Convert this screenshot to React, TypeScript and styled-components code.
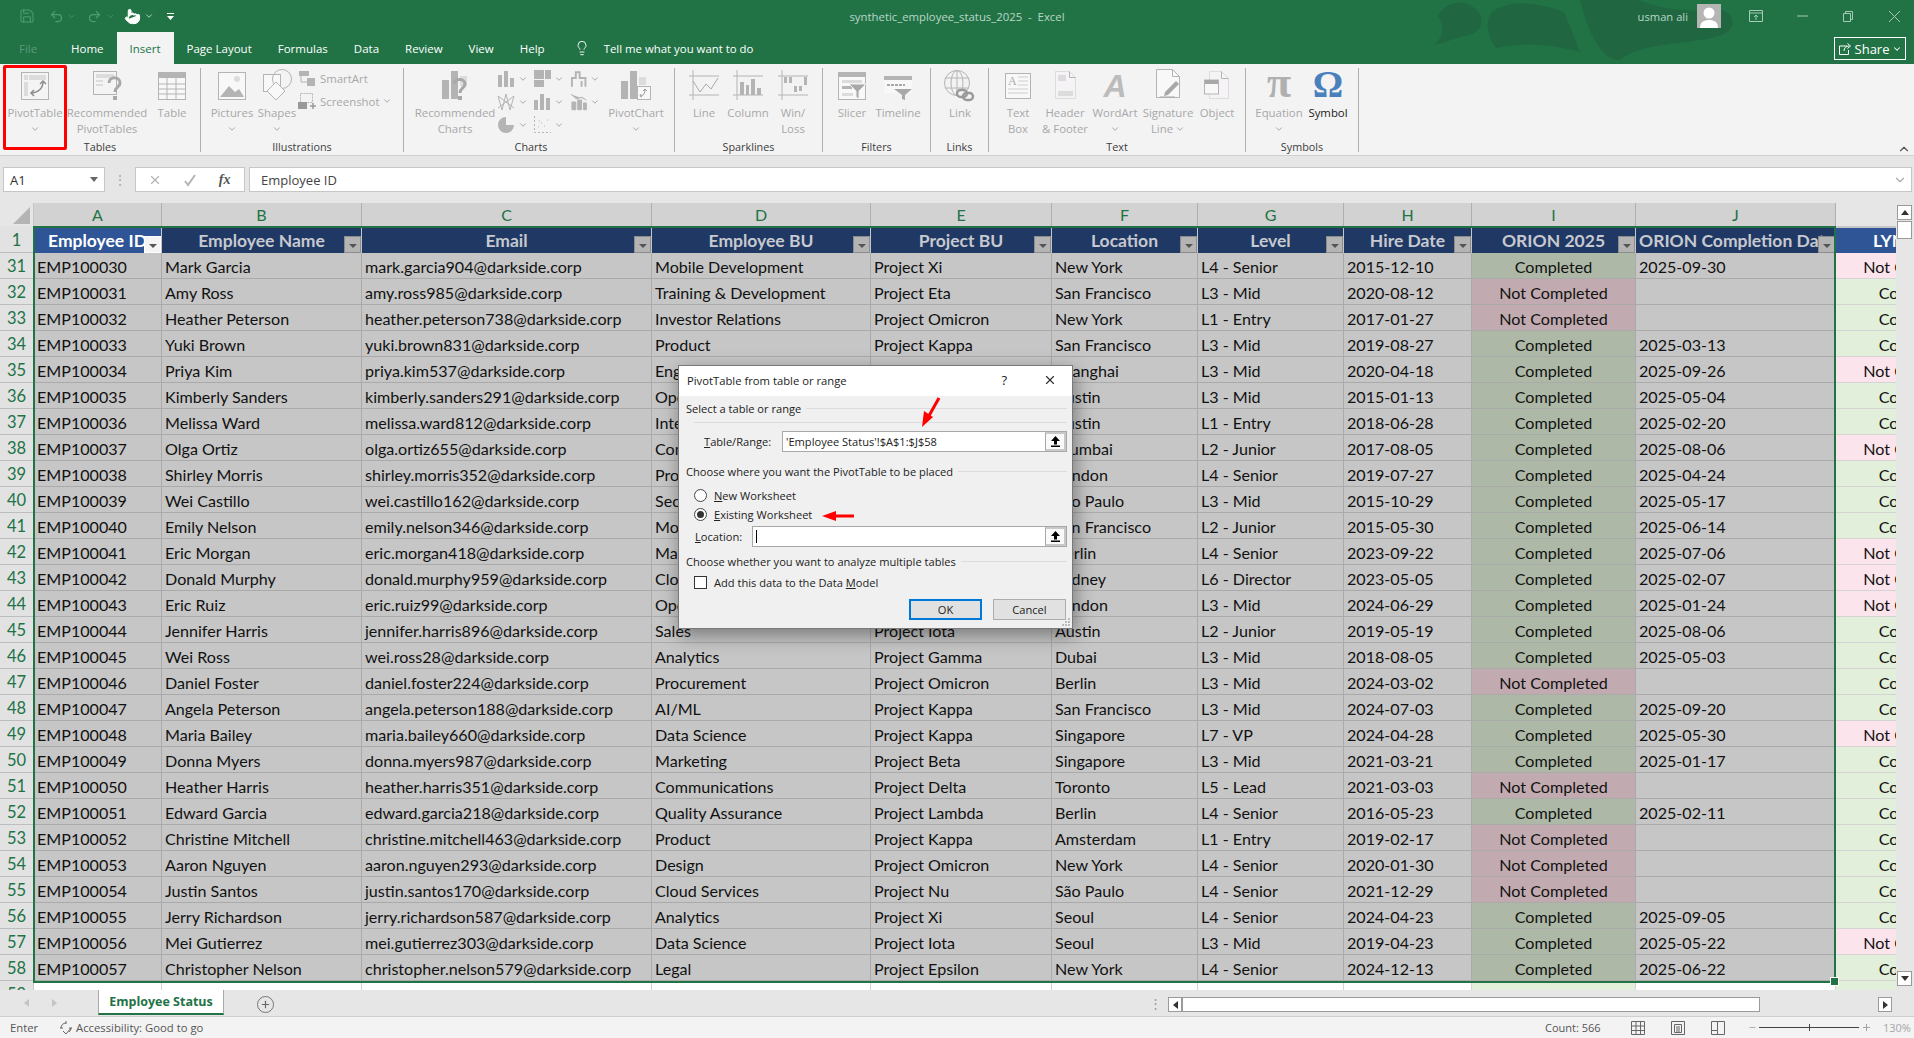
import React from 'react';
import styled, { createGlobalStyle } from 'styled-components';
import { ChevronDown, ChevronUp, Lightbulb, Save, Undo2, Redo2, Pointer, Plus, Minus, X } from 'lucide-react';

const UI = `"Open Sans", "Noto Sans", sans-serif`;
const CELL = `Lato, "Liberation Sans", sans-serif`;
const GRAY = '#b4b4b4';
const LIGHT = '#dcdcdc';

const GlobalStyle = createGlobalStyle`
  html, body { margin: 0; padding: 0; background: #e6e6e6; }
  body { font-family: ${UI}; overflow: hidden; }
`;

const Page = styled.div`
  position: relative;
  width: 1914px;
  height: 1038px;
  overflow: hidden;
  display: flex;
  flex-direction: column;
  background: #e6e6e6;
`;

/* ---------- title bar + tabs ---------- */
const Chrome = styled.div`
  position: relative;
  height: 64px;
  background: #217346;
  display: flex;
  flex-direction: column;
  flex: none;
`;
const Blobs = styled.svg`
  position: absolute;
  left: 1430px;
  top: 0;
`;
const TitleBar = styled.div`
  position: relative;
  height: 32px;
  display: grid;
  grid-template-columns: 1fr auto 1fr;
  align-items: center;
`;
const Qat = styled.div`
  display: flex;
  align-items: center;
  padding-left: 19px;
  color: #4f9a72;
`;
const QatGap = styled.span<{ $w: number; $tint?: string }>`
  display: inline-flex;
  margin-left: ${({ $w }) => $w}px;
  color: ${({ $tint }) => $tint ?? 'inherit'};
`;
const Title = styled.div`
  font-size: 11.35px;
  color: #b9d6c6;
  white-space: pre;
`;
const WindowControls = styled.div`
  display: flex;
  align-items: center;
  justify-content: flex-end;
  color: #a6cbb6;
`;
const UserName = styled.span`
  font-size: 11.2px;
  color: #b9d6c6;
  margin-right: 9px;
`;
const Avatar = styled.svg`
  margin-right: 28px;
  display: block;
`;
const ControlIcon = styled.svg<{ $mr: number }>`
  margin-right: ${({ $mr }) => $mr}px;
  display: block;
`;
const TabRow = styled.div`
  position: relative;
  height: 32px;
  display: flex;
  align-items: stretch;
`;
const Tab = styled.div<{ $active?: boolean; $dim?: boolean }>`
  padding: 0 13px;
  display: flex;
  align-items: center;
  font-size: 11.5px;
  color: ${({ $active, $dim }) => ($active ? '#217346' : $dim ? '#5b9a78' : '#fff')};
  background: ${({ $active }) => ($active ? '#f3f3f3' : 'transparent')};
`;
const FileTab = styled(Tab)`
  width: 58px;
  box-sizing: border-box;
  padding: 0 0 0 19px;
`;
const TellMe = styled.div`
  margin-left: 16px;
  display: flex;
  align-items: center;
  gap: 14px;
  font-size: 11.4px;
  color: #fff;
`;
const ShareButton = styled.div`
  position: absolute;
  left: 1834px;
  top: 5px;
  width: 72px;
  height: 23px;
  box-sizing: border-box;
  border: 1px solid #fff;
  display: flex;
  align-items: center;
  justify-content: center;
  gap: 3px;
  font-size: 13px;
  font-weight: 500;
  color: #fff;
`;

/* ---------- ribbon ---------- */
const Ribbon = styled.div`
  position: relative;
  flex: none;
  height: 92px;
  box-sizing: border-box;
  padding-top: 4px;
  background: #f3f3f3;
  border-bottom: 1px solid #d0d0d0;
  display: flex;
  align-items: flex-start;
`;
const Group = styled.div<{ $w: number }>`
  width: ${({ $w }) => $w}px;
  height: 84px;
  box-sizing: border-box;
  border-right: 1px solid #b0b0b0;
  display: flex;
  flex-direction: column;
  flex: none;
`;
const GroupItems = styled.div<{ $pad: number }>`
  display: flex;
  flex: none;
  height: 74px;
  padding-left: ${({ $pad }) => $pad}px;
`;
const GroupLabel = styled.div<{ $shift?: number }>`
  font-size: 10.8px;
  line-height: 10px;
  color: #3c3c3c;
  text-align: center;
  padding-right: ${({ $shift }) => $shift ?? 0}px;
`;
const Big = styled.div<{ $w: number; $on?: boolean }>`
  width: ${({ $w }) => $w}px;
  flex: none;
  display: flex;
  flex-direction: column;
  align-items: center;
  font-size: 11.4px;
  line-height: 16px;
  white-space: nowrap;
  color: ${({ $on }) => ($on ? '#222' : '#a8a8a8')};
`;
const IconSlot = styled.div`
  height: 37px;
  display: flex;
  align-items: flex-start;
  justify-content: center;
`;
const Chev = styled(ChevronDown)`
  display: block;
  color: #9a9a9a;
`;
const ChevSlot = styled.div`
  height: 16px;
  display: flex;
  align-items: center;
`;
const InlineLine = styled.div`
  display: flex;
  align-items: center;
  gap: 2px;
`;
const SmallList = styled.div`
  display: flex;
  flex-direction: column;
  gap: 3px;
`;
const SmallItem = styled.div`
  display: flex;
  align-items: center;
  gap: 3px;
  height: 20px;
  font-size: 11.4px;
  color: #a8a8a8;
`;
const ChartGrid = styled.div`
  display: grid;
  grid-template-columns: 36px 37px 30px;
  grid-auto-rows: 23px;
  flex: none;
  width: 103px;
  margin-top: -1px;
`;
const ChartCell = styled.div`
  display: flex;
  align-items: center;
  gap: 2px;
`;
const Collapse = styled(ChevronUp)`
  position: absolute;
  left: 1897px;
  top: 78px;
  color: #555;
`;
const RedBox = styled.div`
  position: absolute;
  left: 3px;
  top: 1px;
  width: 64px;
  height: 85px;
  box-sizing: border-box;
  border: 3px solid #f00;
  border-radius: 2px;
`;

/* ---------- formula bar ---------- */
const FormulaRow = styled.div`
  flex: none;
  height: 47px;
  box-sizing: border-box;
  padding: 11px 2px 11px 3px;
  display: flex;
  align-items: stretch;
  background: #e6e6e6;
`;
const NameBox = styled.div`
  width: 102px;
  box-sizing: border-box;
  background: #fff;
  border: 1px solid #c6c6c6;
  display: flex;
  align-items: center;
  justify-content: space-between;
  padding: 0 6px;
  font-size: 13px;
  color: #333;
`;
const Caret = styled.span`
  width: 0;
  height: 0;
  border-left: 4px solid transparent;
  border-right: 4px solid transparent;
  border-top: 5px solid #666;
`;
const Grip = styled.div`
  width: 30px;
  display: flex;
  justify-content: center;
  align-items: center;
  color: #aaa;
  font-size: 14px;
`;
const FxBox = styled.div`
  width: 110px;
  box-sizing: border-box;
  background: #fff;
  border: 1px solid #c6c6c6;
  display: grid;
  grid-template-columns: 1fr 1fr 1fr;
  align-items: center;
  justify-items: center;
  color: #b4b4b4;
  margin-right: 4px;
  padding: 0 2px;
`;
const FxText = styled.span`
  font-family: "Liberation Serif", serif;
  font-style: italic;
  font-size: 14px;
  font-weight: 700;
  color: #555;
`;
const FormulaInput = styled.div`
  flex: 1;
  background: #fff;
  border: 1px solid #c6c6c6;
  display: flex;
  align-items: center;
  justify-content: space-between;
  padding: 0 4px 0 11px;
  font-size: 13px;
  color: #444;
`;

/* ---------- sheet ---------- */
const SheetArea = styled.div`
  flex: none;
  height: 787px;
  display: flex;
`;
const Sheet = styled.div`
  position: relative;
  width: 1896px;
  height: 787px;
  overflow: hidden;
  background: #fff;
  display: grid;
  grid-template-columns: 34px 128px 200px 290px 219px 181px 146px 146px 128px 164px 200px 164px;
  grid-template-rows: 23px 27px repeat(29, 26px);
  font-family: ${CELL};
  font-size: 16.1px;
`;
const Corner = styled.div`
  background: #e6e6e6;
  border-right: 1px solid #c6c6c6;
  display: flex;
  align-items: flex-end;
  justify-content: flex-end;
  padding: 0 3px 2px 0;
`;
const ColHead = styled.div<{ $blank?: boolean }>`
  background: ${({ $blank }) => ($blank ? '#e6e6e6' : '#d2d2d2')};
  border-right: 1px solid ${({ $blank }) => ($blank ? '#e6e6e6' : '#aeaeae')};
  color: #217346;
  display: flex;
  align-items: center;
  justify-content: center;
  font-size: 16px;
`;
const RowHead = styled.div`
  background: #e2e2e2;
  border-right: 1px solid #c6c6c6;
  border-bottom: 1px solid #bdbdbd;
  color: #217346;
  display: flex;
  align-items: center;
  justify-content: center;
  padding-top: 1px;
  font-size: 16.5px;
`;
const HeadCell = styled.div<{ $lit?: boolean; $left?: boolean }>`
  position: relative;
  background: ${({ $lit }) => ($lit ? '#2f5597' : '#203864')};
  color: ${({ $lit }) => ($lit ? '#fff' : '#c6c9cf')};
  border-right: 1px solid #c6c6c6;
  border-top: 2px solid #c6c6c6;
  font-weight: 700;
  font-size: 17.5px;
  display: flex;
  align-items: center;
  justify-content: ${({ $left }) => ($left ? 'flex-start' : 'center')};
  padding-left: ${({ $left }) => ($left ? 3 : 0)}px;
  overflow: hidden;
  white-space: nowrap;
`;
const FilterBtn = styled.span<{ $lit?: boolean }>`
  position: absolute;
  right: 0;
  bottom: 0;
  width: 17px;
  height: 17px;
  box-sizing: border-box;
  background: ${({ $lit }) => ($lit ? '#f4f4f4' : '#b4b4b4')};
  border: 1px solid ${({ $lit }) => ($lit ? '#fff' : '#8c8c8c')};
  display: flex;
  align-items: center;
  justify-content: center;
`;
const FilterCaret = styled.span`
  margin-top: 2px;
  width: 0;
  height: 0;
  border-left: 4px solid transparent;
  border-right: 4px solid transparent;
  border-top: 4px solid #555;
`;
type Tone = 'plain' | 'done' | 'miss' | 'kdone' | 'kmiss' | 'white' | 'wdone';
const toneBg: Record<Tone, string> = {
  plain: '#c6c6c6',
  done: '#adb9a6',
  miss: '#c1abb0',
  kdone: '#e2efda',
  kmiss: '#fce4ec',
  white: '#fff',
  wdone: '#e2efda',
};
const Cell = styled.div<{ $tone: Tone; $center?: boolean }>`
  background: ${({ $tone }) => toneBg[$tone]};
  border-right: 1px solid ${({ $tone }) => ($tone === 'white' || $tone[0] === 'k' || $tone === 'wdone' ? '#d4d4d4' : '#aaa')};
  border-bottom: 1px solid ${({ $tone }) => ($tone === 'white' || $tone[0] === 'k' || $tone === 'wdone' ? '#d4d4d4' : '#aaa')};
  color: #111;
  display: flex;
  align-items: center;
  justify-content: ${({ $center }) => ($center ? 'center' : 'flex-start')};
  padding: 1px 3px 0;
  overflow: hidden;
  white-space: nowrap;
`;
const Selection = styled.div`
  position: absolute;
  left: 33px;
  top: 23px;
  width: 1803px;
  height: 757px;
  box-sizing: border-box;
  border: 2px solid #217346;
  pointer-events: none;
`;
const Handle = styled.div`
  position: absolute;
  right: -5px;
  bottom: -5px;
  width: 7px;
  height: 7px;
  background: #217346;
  border: 1px solid #fff;
`;
const VScroll = styled.div`
  width: 18px;
  background: #e6e6e6;
  padding-top: 2px;
  padding-left: 1px;
  display: flex;
  flex-direction: column;
  box-sizing: border-box;
`;
const ScrollBtn = styled.div<{ $wide?: number }>`
  width: ${({ $wide }) => $wide ?? 15}px;
  height: 15px;
  box-sizing: border-box;
  background: #fff;
  border: 1px solid #9a9a9a;
  display: flex;
  align-items: center;
  justify-content: center;
  flex: none;
`;
const VThumb = styled.div`
  width: 15px;
  height: 18px;
  margin-top: 1px;
  background: #fff;
  border: 1px solid #9a9a9a;
  box-sizing: border-box;
`;
const VGap = styled.div`
  flex: 1;
`;
const VEnd = styled.div`
  flex: none;
  height: 4px;
`;
const Tri = styled.span<{ $dir: 'up' | 'down' | 'left' | 'right'; $color?: string }>`
  width: 0;
  height: 0;
  ${({ $dir, $color }) => {
    const c = $color ?? '#333';
    if ($dir === 'up') return `border-left:4px solid transparent;border-right:4px solid transparent;border-bottom:5px solid ${c};`;
    if ($dir === 'down') return `border-left:4px solid transparent;border-right:4px solid transparent;border-top:5px solid ${c};`;
    if ($dir === 'left') return `border-top:4px solid transparent;border-bottom:4px solid transparent;border-right:5px solid ${c};`;
    return `border-top:4px solid transparent;border-bottom:4px solid transparent;border-left:5px solid ${c};`;
  }}
`;

/* ---------- sheet tabs + status ---------- */
const SheetTabs = styled.div`
  flex: none;
  height: 27px;
  box-sizing: border-box;
  border-bottom: 1px solid #cfcfcf;
  background: #e6e6e6;
  display: flex;
  align-items: flex-start;
`;
const TabArrows = styled.div`
  width: 98px;
  height: 25px;
  display: flex;
  align-items: center;
  gap: 23px;
  padding-left: 24px;
  box-sizing: border-box;
`;
const SheetTab = styled.div`
  width: 126px;
  height: 25px;
  box-sizing: border-box;
  background: #fff;
  border-left: 1px solid #aaa;
  border-right: 1px solid #aaa;
  border-bottom: 2px solid #217346;
  color: #217346;
  font-weight: 700;
  font-size: 12.5px;
  display: flex;
  align-items: center;
  justify-content: center;
`;
const AddSheet = styled.div`
  margin-left: 33px;
  margin-top: 6px;
  width: 15px;
  height: 15px;
  border: 1px solid #777;
  border-radius: 50%;
  color: #666;
  display: flex;
  align-items: center;
  justify-content: center;
`;
const TabSplit = styled.div`
  margin-left: 871px;
  margin-top: 4px;
  color: #999;
  font-size: 13px;
  width: 20px;
  text-align: center;
`;
const HScroll = styled.div`
  margin-top: 7px;
  margin-left: 3px;
  width: 724px;
  display: flex;
  align-items: stretch;
  height: 15px;
`;
const HThumb = styled.div`
  width: 578px;
  background: #fff;
  border: 1px solid #9a9a9a;
  box-sizing: border-box;
`;
const HTrack = styled.div`
  flex: 1;
`;
const StatusBar = styled.div`
  flex: none;
  height: 21px;
  background: #f3f3f3;
  display: flex;
  align-items: center;
  font-size: 11px;
  color: #555;
  padding-left: 10px;
`;
const StatusLeft = styled.div`
  display: flex;
  align-items: center;
  gap: 2px;
  width: 1535px;
  font-size: 11.3px;
`;
const EnterText = styled.span`
  width: 46px;
`;
const CountText = styled.span`
  width: 86px;
`;
const ViewIcon = styled.svg`
  margin-right: 26px;
  display: block;
`;
const Zoom = styled.div`
  display: flex;
  align-items: center;
  margin-left: -3px;
  color: #9a9a9a;
`;
const ZoomTrack = styled.div`
  position: relative;
  width: 100px;
  height: 1px;
  margin: 0 2px;
  background: #444;
`;
const ZoomTick = styled.span`
  position: absolute;
  left: 50px;
  top: -3px;
  width: 1px;
  height: 7px;
  background: #444;
`;
const ZoomPct = styled.span`
  margin-left: 11px;
  color: #a6a6a6;
`;

/* ---------- dialog ---------- */
const Dialog = styled.div`
  position: absolute;
  left: 678px;
  top: 365px;
  width: 395px;
  height: 264px;
  box-sizing: border-box;
  background: #f0f0f0;
  border: 1px solid #7a7a7a;
  box-shadow: 2px 6px 18px rgba(0, 0, 0, 0.4);
  font-size: 11.1px;
  color: #222;
  display: flex;
  flex-direction: column;
`;
const DialogTitle = styled.div`
  flex: none;
  height: 30px;
  background: #fff;
  display: flex;
  align-items: center;
  padding: 0 0 2px 8px;
  box-sizing: border-box;
  font-size: 11.25px;
`;
const TitleText = styled.span`
  flex: 1;
`;
const HelpMark = styled.span`
  font-size: 13px;
  margin-right: 36px;
`;
const DialogX = styled(X)`
  margin-right: 15px;
  color: #333;
`;
const DialogBody = styled.div`
  position: relative;
  flex: 1;
  padding: 0 5px 0 7px;
  display: flex;
  flex-direction: column;
`;
const Legend = styled.div<{ $mt: number }>`
  margin-top: ${({ $mt }) => $mt}px;
  height: 16px;
  display: flex;
  align-items: center;
  gap: 5px;
  white-space: nowrap;
`;
const Rule = styled.div`
  flex: 1;
  height: 1px;
  background: #dcdcdc;
`;
const SubRule = styled.div`
  margin: 6px 0 0 8px;
  height: 1px;
  background: #dcdcdc;
`;
const FieldRow = styled.div<{ $mt: number; $indent: number }>`
  margin-top: ${({ $mt }) => $mt}px;
  padding-left: ${({ $indent }) => $indent}px;
  display: flex;
  align-items: center;
  height: 21px;
`;
const FieldLabel = styled.span<{ $w: number }>`
  width: ${({ $w }) => $w}px;
  flex: none;
`;
const FieldBox = styled.div`
  flex: 1;
  height: 21px;
  box-sizing: border-box;
  border: 1px solid #a8a8a8;
  background: #fff;
  display: flex;
  align-items: center;
  padding-left: 3px;
  white-space: nowrap;
`;
const FieldText = styled.span`
  flex: 1;
  font-size: 11.1px;
`;
const TextCursor = styled.span`
  display: block;
  width: 1px;
  height: 13px;
  background: #000;
`;
const RefBtn = styled.div`
  width: 21px;
  height: 19px;
  background: #fafafa;
  border: 2px solid #c8c8c8;
  border-left: 1px solid #a8a8a8;
  box-sizing: border-box;
  display: flex;
  align-items: center;
  justify-content: center;
`;
const OptionRow = styled.div<{ $mt: number }>`
  margin-top: ${({ $mt }) => $mt}px;
  padding-left: 8px;
  height: 13px;
  display: flex;
  align-items: center;
  gap: 7px;
  white-space: nowrap;
`;
const Radio = styled.span<{ $on?: boolean }>`
  position: relative;
  width: 13px;
  height: 13px;
  box-sizing: border-box;
  border: 1px solid #444;
  border-radius: 50%;
  background: #fff;
  display: flex;
  align-items: center;
  justify-content: center;
  &::after {
    content: '';
    display: ${({ $on }) => ($on ? 'block' : 'none')};
    width: 7px;
    height: 7px;
    border-radius: 50%;
    background: #333;
  }
`;
const Check = styled.span`
  width: 13px;
  height: 13px;
  box-sizing: border-box;
  border: 1px solid #333;
  background: #fff;
`;
const U = styled.span`
  text-decoration: underline;
`;
const ButtonRow = styled.div`
  margin-top: 10px;
  display: flex;
  justify-content: flex-end;
  gap: 11px;
  padding-right: 1px;
`;
const DlgButton = styled.div<{ $primary?: boolean }>`
  width: 73px;
  height: 21px;
  box-sizing: border-box;
  background: #e1e1e1;
  border: ${({ $primary }) => ($primary ? '2px solid #0078d7' : '1px solid #adadad')};
  display: flex;
  align-items: center;
  justify-content: center;
`;
const ResizeGrip = styled.svg`
  position: absolute;
  right: 1px;
  bottom: 1px;
`;
const Annot = styled.svg`
  position: absolute;
  left: 0;
  top: 0;
  pointer-events: none;
`;

/* ---------- ribbon drawings ---------- */
const Svg = ({ w = 32, h = 32, children }: { w?: number; h?: number; children: React.ReactNode }) => (
  <svg width={w} height={h} viewBox={`0 0 ${w} ${h}`} fill="none">
    {children}
  </svg>
);
const UpArrow = () => (
  <svg width="11" height="11" viewBox="0 0 11 11" fill="#000">
    <path d="M5.500 0L10 5H7v3.500H4V5H1zM1 9.500h9V11H1z" />
  </svg>
);
const PivotIcon = () => (
  <Svg w={30} h={32}>
    <rect x="1.5" y="4.5" width="27" height="27" fill="#f4f4f4" stroke={GRAY} />
    <rect x="9" y="7" width="17" height="5" fill={LIGHT} />
    <rect x="4" y="7" width="4" height="5" fill={LIGHT} />
    <rect x="4" y="14" width="4" height="14" fill={LIGHT} />
    <path d="M11 25C18 25 23 20 23 14" stroke="#8c8c8c" strokeWidth="1.5" />
    <path d="M14 22l-3 3 3 3M20 16l3-3 3 3" stroke="#8c8c8c" strokeWidth="1.5" />
  </Svg>
);
const RecPivotIcon = () => (
  <Svg w={30} h={34}>
    <rect x="1.5" y="3.500" width="23" height="23" fill="#f4f4f4" stroke={GRAY} />
    <rect x="4" y="6" width="18" height="4" fill={LIGHT} />
    <rect x="4" y="12" width="7" height="2" fill={LIGHT} />
    <rect x="4" y="16" width="7" height="2" fill={LIGHT} />
    <path d="M17 15c0-7 11-7 11 0 0 4-5 4-5 9" stroke="#a8a8a8" strokeWidth="3" />
    <rect x="21" y="28" width="4" height="4" fill="#a8a8a8" />
  </Svg>
);
const TableIcon = () => (
  <Svg w={30} h={32}>
    <rect x="1.5" y="4.500" width="27" height="27" fill="#f8f8f8" stroke={GRAY} />
    <rect x="2" y="5" width="26" height="5" fill={GRAY} />
    <path d="M2 16h26M2 21h26M2 26h26M10 10v21M19 10v21" stroke={GRAY} />
  </Svg>
);
const PicturesIcon = () => (
  <Svg w={30} h={32}>
    <rect x="1.5" y="4.500" width="27" height="27" fill="#f8f8f8" stroke={GRAY} />
    <circle cx="20" cy="11" r="3" fill={LIGHT} />
    <path d="M3 29l9-11 6 6 4-3 5 8z" fill={GRAY} />
  </Svg>
);
const ShapesIcon = () => (
  <Svg w={32} h={34}>
    <rect x="2.500" y="6.500" width="17" height="17" fill="#f8f8f8" stroke={GRAY} />
    <circle cx="21" cy="11" r="9.500" stroke={GRAY} fill="none" />
    <path d="M15 14l9 9-9 9-9-9z" fill="#f8f8f8" stroke={GRAY} />
  </Svg>
);
const RecChartIcon = () => (
  <Svg w={30} h={34}>
    <rect x="2" y="12" width="7" height="19" fill={GRAY} />
    <rect x="11" y="3" width="7" height="28" fill={GRAY} />
    <rect x="20" y="8" width="7" height="10" fill={LIGHT} />
    <path d="M14 16c0-6 11-6 11 0 0 4-5 4-5 9" stroke="#a8a8a8" strokeWidth="3" />
    <rect x="18" y="28" width="4" height="4" fill="#a8a8a8" />
  </Svg>
);
const PivotChartIcon = () => (
  <Svg w={32} h={34}>
    <rect x="1" y="13" width="7" height="18" fill={GRAY} />
    <rect x="10" y="3" width="7" height="28" fill={GRAY} />
    <rect x="19" y="9" width="7" height="8" fill={LIGHT} />
    <rect x="17.500" y="18.500" width="13" height="13" fill="#f8f8f8" stroke={GRAY} />
    <path d="M25 22c0 3-1 5-4 6M21 26l-1 2 2 1M23 23l2-2 2 2" stroke="#999" />
  </Svg>
);
const SparkFrame = ({ children }: { children: React.ReactNode }) => (
  <Svg w={30} h={32}>
    <path d="M0 8h30M0 27h30M4 2v30" stroke={GRAY} />
    {children}
  </Svg>
);
const LineSpark = () => (
  <SparkFrame>
    <path d="M4 13l7 11 6-8 5 5 7-11" stroke="#a8a8a8" fill="none" />
  </SparkFrame>
);
const ColumnSpark = () => (
  <SparkFrame>
    <path d="M7 14h4v13H7zM13 17h3v10h-3zM18 11h4v16h-4zM24 20h4v7h-4z" fill={GRAY} />
  </SparkFrame>
);
const WinSpark = () => (
  <SparkFrame>
    <path d="M6 9h3v6H6zM11 9h3v6h-3zM16 18h3v6h-3zM21 18h3v5h-3zM26 9h3v8h-3z" fill={GRAY} />
  </SparkFrame>
);
const SlicerIcon = () => (
  <Svg w={30} h={32}>
    <rect x="1.500" y="4.500" width="27" height="27" fill="#f8f8f8" stroke={GRAY} />
    <rect x="2" y="5" width="26" height="4" fill={GRAY} />
    <rect x="5" y="12" width="20" height="3" fill={LIGHT} />
    <rect x="5" y="18" width="10" height="3" fill={GRAY} />
    <rect x="5" y="25" width="11" height="3" fill={LIGHT} />
    <path d="M12 16h17l-7 7v8l-3-2v-6z" fill="#a8a8a8" stroke="#f3f3f3" />
  </Svg>
);
const TimelineIcon = () => (
  <Svg w={30} h={32}>
    <rect x="1" y="8" width="28" height="17" fill="#f8f8f8" />
    <rect x="1" y="8" width="28" height="4" fill={GRAY} />
    <path d="M4 17h18" stroke="#a8a8a8" strokeWidth="2" strokeDasharray="3 1" />
    <path d="M11 21h18l-7 6v5l-3-1v-4z" fill="#a8a8a8" />
  </Svg>
);
const LinkIcon = () => (
  <Svg w={34} h={34}>
    <circle cx="14" cy="15" r="12.500" stroke={GRAY} />
    <ellipse cx="14" cy="15" rx="6" ry="12.500" stroke={GRAY} />
    <path d="M2 10h24M2 20h24M14 2v26" stroke={GRAY} />
    <rect x="14" y="22" width="10" height="7" rx="3.500" stroke="#999" strokeWidth="2.400" fill="#f3f3f3" />
    <rect x="20" y="25" width="10" height="7" rx="3.500" stroke="#999" strokeWidth="2.400" />
  </Svg>
);
const TextBoxIcon = () => (
  <Svg w={30} h={32}>
    <rect x="2.500" y="5.500" width="25" height="25" fill="#f8f8f8" stroke={GRAY} />
    <text x="5" y="17" fontSize="12" fill="#a8a8a8" fontFamily="Liberation Serif, serif">A</text>
    <path d="M15 9h10M15 13h10M15 17h10M5 21h20M5 25h20" stroke={LIGHT} strokeWidth="1.400" />
  </Svg>
);
const DocIcon = ({ bars }: { bars?: boolean }) => (
  <Svg w={24} h={34}>
    <path d="M2.500 3.500h14l6 6v21h-20z" fill="#f6f3f6" stroke={LIGHT} />
    <path d="M16.500 3.500v6h6" stroke={GRAY} />
    {bars && <rect x="5" y="7" width="8" height="6" fill={LIGHT} />}
    {bars && <rect x="5" y="23" width="15" height="5" fill={LIGHT} />}
  </Svg>
);
const SignatureIcon = () => (
  <Svg w={30} h={34}>
    <path d="M3.500 1.500h16l7 7v21h-23z" fill="#f8f8f8" stroke={GRAY} />
    <path d="M19.500 1.500v7h7" stroke={GRAY} />
    <path d="M12 24l11-11 3 3-11 11-4 1z" fill="#a8a8a8" />
    <path d="M7 29h15" stroke="#a8a8a8" />
  </Svg>
);
const ObjectIcon = () => (
  <Svg w={28} h={34}>
    <path d="M6.500 3.500h12l7 7v20h-19z" fill="#f6f3f6" stroke={LIGHT} />
    <path d="M18.500 3.500v7h7" stroke={GRAY} />
    <rect x="1.500" y="12" width="14" height="14" fill="#f8f8f8" stroke={GRAY} />
    <rect x="2" y="12" width="13" height="4" fill="#a8a8a8" />
  </Svg>
);
const WordArtGlyph = styled.span`
  font-family: "Liberation Sans", sans-serif;
  font-style: italic;
  font-weight: 700;
  font-size: 32px;
  line-height: 36px;
  color: #bcbcbc;
`;
const PiGlyph = styled.span`
  font-family: "Liberation Serif", serif;
  font-weight: 700;
  font-size: 44px;
  line-height: 30px;
  color: #b0b0b0;
`;
const OmegaGlyph = styled.span`
  font-family: "Liberation Serif", serif;
  font-weight: 700;
  font-size: 38px;
  line-height: 32px;
  color: #4a81bd;
`;
const MiniChart = ({ kind }: { kind: number }) => {
  const c = GRAY;
  const shapes: React.ReactNode[] = [
    <path key="0" d="M1 6h4v12H1zM7 2h4v16H7zM13 9h4v9h-4z" fill={c} />,
    <path key="1" d="M1 1h10v9H1zM12 1h6v9h-6zM1 11h10v7H1z" fill={c} />,
    <path key="2" d="M2 18V9h4V3h4v6h6v9M12 12v6" stroke={c} strokeWidth="2" />,
    <path key="3" d="M1 4l4 14 4-16 4 16 4-14M1 16L17 4M1 4l16 12" stroke={c} />,
    <path key="4" d="M1 8h4v10H1zM7 2h4v16H7zM13 6h4v12h-4z" fill={c} />,
    <path key="5" d="M1 2l6 5 5-2 5 3M2 10h4v8H2zM8 8h4v10H8zM14 11h3v7h-3z" stroke={c} fill={c} />,
    <path key="6" d="M9 2a8 8 0 1 0 8 8H9z" fill={c} />,
    <path key="7" d="M1.500 1v16.500H18M5 12h1M8 8h1M11 11h1M14 5h1M6 6h1" stroke={c} strokeDasharray="2 2" />,
  ];
  return <Svg w={19} h={19}>{shapes[kind]}</Svg>;
};
const SmallChev = () => <Chev size={10} />;

/* ---------- data ---------- */
const raw = `31|EMP100030|Mark Garcia|mark.garcia904|Mobile Development|Project Xi|New York|L4 - Senior|2015-12-10|2025-09-30|n
32|EMP100031|Amy Ross|amy.ross985|Training & Development|Project Eta|San Francisco|L3 - Mid|2020-08-12||c
33|EMP100032|Heather Peterson|heather.peterson738|Investor Relations|Project Omicron|New York|L1 - Entry|2017-01-27||c
34|EMP100033|Yuki Brown|yuki.brown831|Product|Project Kappa|San Francisco|L3 - Mid|2019-08-27|2025-03-13|c
35|EMP100034|Priya Kim|priya.kim537|Engineering|Project Nu|Shanghai|L3 - Mid|2020-04-18|2025-09-26|n
36|EMP100035|Kimberly Sanders|kimberly.sanders291|Operations|Project Beta|Austin|L3 - Mid|2015-01-13|2025-05-04|c
37|EMP100036|Melissa Ward|melissa.ward812|Internal Audit|Project Xi|Austin|L1 - Entry|2018-06-28|2025-02-20|c
38|EMP100037|Olga Ortiz|olga.ortiz655|Compliance|Project Iota|Mumbai|L2 - Junior|2017-08-05|2025-08-06|n
39|EMP100038|Shirley Morris|shirley.morris352|Product|Project Eta|London|L4 - Senior|2019-07-27|2025-04-24|c
40|EMP100039|Wei Castillo|wei.castillo162|Security|Project Delta|São Paulo|L3 - Mid|2015-10-29|2025-05-17|c
41|EMP100040|Emily Nelson|emily.nelson346|Mobile Development|Project Beta|San Francisco|L2 - Junior|2015-05-30|2025-06-14|c
42|EMP100041|Eric Morgan|eric.morgan418|Marketing|Project Nu|Berlin|L4 - Senior|2023-09-22|2025-07-06|n
43|EMP100042|Donald Murphy|donald.murphy959|Cloud Services|Project Xi|Sydney|L6 - Director|2023-05-05|2025-02-07|n
44|EMP100043|Eric Ruiz|eric.ruiz99|Operations|Project Eta|London|L3 - Mid|2024-06-29|2025-01-24|n
45|EMP100044|Jennifer Harris|jennifer.harris896|Sales|Project Iota|Austin|L2 - Junior|2019-05-19|2025-08-06|c
46|EMP100045|Wei Ross|wei.ross28|Analytics|Project Gamma|Dubai|L3 - Mid|2018-08-05|2025-05-03|c
47|EMP100046|Daniel Foster|daniel.foster224|Procurement|Project Omicron|Berlin|L3 - Mid|2024-03-02||c
48|EMP100047|Angela Peterson|angela.peterson188|AI/ML|Project Kappa|San Francisco|L3 - Mid|2024-07-03|2025-09-20|c
49|EMP100048|Maria Bailey|maria.bailey660|Data Science|Project Kappa|Singapore|L7 - VP|2024-04-28|2025-05-30|n
50|EMP100049|Donna Myers|donna.myers987|Marketing|Project Beta|Singapore|L3 - Mid|2021-03-21|2025-01-17|c
51|EMP100050|Heather Harris|heather.harris351|Communications|Project Delta|Toronto|L5 - Lead|2021-03-03||c
52|EMP100051|Edward Garcia|edward.garcia218|Quality Assurance|Project Lambda|Berlin|L4 - Senior|2016-05-23|2025-02-11|c
53|EMP100052|Christine Mitchell|christine.mitchell463|Product|Project Kappa|Amsterdam|L1 - Entry|2019-02-17||c
54|EMP100053|Aaron Nguyen|aaron.nguyen293|Design|Project Omicron|New York|L4 - Senior|2020-01-30||c
55|EMP100054|Justin Santos|justin.santos170|Cloud Services|Project Nu|São Paulo|L4 - Senior|2021-12-29||c
56|EMP100055|Jerry Richardson|jerry.richardson587|Analytics|Project Xi|Seoul|L4 - Senior|2024-04-23|2025-09-05|c
57|EMP100056|Mei Gutierrez|mei.gutierrez303|Data Science|Project Iota|Seoul|L3 - Mid|2019-04-23|2025-05-22|n
58|EMP100057|Christopher Nelson|christopher.nelson579|Legal|Project Epsilon|New York|L4 - Senior|2024-12-13|2025-06-22|c`;
const rows = raw.split('\n').map((l) => l.split('|'));

const headers = ['Employee ID', 'Employee Name', 'Email', 'Employee BU', 'Project BU', 'Location', 'Level', 'Hire Date', 'ORION 2025', 'ORION Completion Date'];

const chartOrder = [0, 1, 2, 3, 4, 5, 6, 7];

const DataRow = ({ r }: { r: string[] }) => {
  const [num, id, name, mail, bu, project, city, level, hire, done, k] = r;
  return (
    <>
      <RowHead>{num}</RowHead>
      <Cell $tone="plain">{id}</Cell>
      <Cell $tone="plain">{name}</Cell>
      <Cell $tone="plain">{mail}@darkside.corp</Cell>
      <Cell $tone="plain">{bu}</Cell>
      <Cell $tone="plain">{project}</Cell>
      <Cell $tone="plain">{city}</Cell>
      <Cell $tone="plain">{level}</Cell>
      <Cell $tone="plain">{hire}</Cell>
      <Cell $tone={done ? 'done' : 'miss'} $center>{done ? 'Completed' : 'Not Completed'}</Cell>
      <Cell $tone="plain">{done}</Cell>
      <Cell $tone={k === 'n' ? 'kmiss' : 'kdone'} $center>{k === 'n' ? 'Not Completed' : 'Completed'}</Cell>
    </>
  );
};

export default function App() {
  return (
    <Page>
      <GlobalStyle />
      <Chrome>
        <Blobs width="370" height="64" viewBox="0 0 370 64">
          <path d="M8 16c8-16 30-18 40-4 8 10 2 22-14 24-8 1-20 8-30 8 8-6 12-14 4-28zM62 12c20-14 50-8 72 0l16 40c-30-8-56-10-84-4-8-12-12-26-4-36zM150 0h60c20 10 50 12 80 10 10 0 20 16 4 24-30 12-80 6-104 26-16 0-30-20-40-60z" fill="#1f6641" />
        </Blobs>
        <TitleBar>
          <Qat>
            <Save size={16} strokeWidth={1.6} />
            <QatGap $w={14}><Undo2 size={15} strokeWidth={2} /></QatGap>
            <QatGap $w={3}><ChevronDown size={9} /></QatGap>
            <QatGap $w={11}><Redo2 size={15} strokeWidth={2} /></QatGap>
            <QatGap $w={4}><ChevronDown size={9} /></QatGap>
            <QatGap $w={9} $tint="#fff"><Pointer size={17} fill="#fff" strokeWidth={1.4} /></QatGap>
            <QatGap $w={3} $tint="#cfe3d8"><ChevronDown size={10} /></QatGap>
            <QatGap $w={12} $tint="#fff">
              <svg width="9" height="9" viewBox="0 0 9 9" fill="#fff">
                <path d="M1 1h7v1H1zM1 4h7L4.500 8z" />
              </svg>
            </QatGap>
          </Qat>
          <Title>synthetic_employee_status_2025  -  Excel</Title>
          <WindowControls>
            <UserName>usman ali</UserName>
            <Avatar width="24" height="24" viewBox="0 0 24 24">
              <rect width="24" height="24" fill="#b5b5b5" />
              <circle cx="12" cy="9" r="5.500" fill="#fff" />
              <path d="M3 24c0-6 4-8 9-8s9 2 9 8z" fill="#fff" />
            </Avatar>
            <ControlIcon $mr={34} width="14" height="12" viewBox="0 0 14 12" fill="none" stroke="currentColor">
              <path d="M.5.5h13v11H.5zM.5 3h13M7 10V5M5 7l2-2 2 2" />
            </ControlIcon>
            <ControlIcon $mr={35} width="11" height="2" viewBox="0 0 11 2" stroke="currentColor">
              <path d="M0 1h11" />
            </ControlIcon>
            <ControlIcon $mr={36} width="10" height="11" viewBox="0 0 10 11" fill="none" stroke="currentColor">
              <path d="M.5 2.500h7v8h-7zM2.500 2.500v-2h7v8h-2" />
            </ControlIcon>
            <ControlIcon $mr={14} width="11" height="11" viewBox="0 0 11 11" fill="none" stroke="currentColor">
              <path d="M0 0l11 11M11 0L0 11" />
            </ControlIcon>
          </WindowControls>
        </TitleBar>
        <TabRow>
          <FileTab $dim>File</FileTab>
          <Tab>Home</Tab>
          <Tab $active>Insert</Tab>
          <Tab>Page Layout</Tab>
          <Tab>Formulas</Tab>
          <Tab>Data</Tab>
          <Tab>Review</Tab>
          <Tab>View</Tab>
          <Tab>Help</Tab>
          <TellMe>
            <Lightbulb size={16} strokeWidth={1.4} />
            Tell me what you want to do
          </TellMe>
          <ShareButton>
            <svg width="14" height="14" viewBox="0 0 14 14" fill="none" stroke="#fff">
              <path d="M9 4H1.500v8.500h9V8M6 9c0-3 2-5 5-5M9.500 1.500L12.500 4 9.500 6.500" />
            </svg>
            Share
            <ChevronDown size={10} strokeWidth={2.5} />
          </ShareButton>
        </TabRow>
      </Chrome>

      <Ribbon>
        <Group $w={201}>
          <GroupItems $pad={3}>
            <Big $w={64}><IconSlot><PivotIcon /></IconSlot>PivotTable<ChevSlot><SmallChev /></ChevSlot></Big>
            <Big $w={80}><IconSlot><RecPivotIcon /></IconSlot>Recommended<span>PivotTables</span></Big>
            <Big $w={50}><IconSlot><TableIcon /></IconSlot>Table</Big>
          </GroupItems>
          <GroupLabel>Tables</GroupLabel>
        </Group>
        <Group $w={203}>
          <GroupItems $pad={6}>
            <Big $w={50}><IconSlot><PicturesIcon /></IconSlot>Pictures<ChevSlot><SmallChev /></ChevSlot></Big>
            <Big $w={40}><IconSlot><ShapesIcon /></IconSlot>Shapes<ChevSlot><SmallChev /></ChevSlot></Big>
            <SmallList>
              <SmallItem>
                <Svg w={20} h={20}><path d="M2 3h10v5H2zM10 10h8v8h-8z" fill={GRAY} /><path d="M4 8v6h6" stroke={GRAY} /></Svg>
                SmartArt
              </SmallItem>
              <SmallItem>
                <Svg w={20} h={20}><rect x="3.500" y="2.500" width="12" height="9" stroke={GRAY} strokeDasharray="2 1" /><rect x="1" y="11" width="9" height="7" fill="#999" /><path d="M13 15h6M16 12v6" stroke="#999" strokeWidth="1.500" /></Svg>
                Screenshot<SmallChev />
              </SmallItem>
            </SmallList>
          </GroupItems>
          <GroupLabel>Illustrations</GroupLabel>
        </Group>
        <Group $w={271}>
          <GroupItems $pad={9}>
            <Big $w={84}><IconSlot><RecChartIcon /></IconSlot>Recommended<span>Charts</span></Big>
            <ChartGrid>
              {chartOrder.map((k) => (
                <ChartCell key={k}><MiniChart kind={k} /><SmallChev /></ChartCell>
              ))}
            </ChartGrid>
            <Big $w={72}><IconSlot><PivotChartIcon /></IconSlot>PivotChart<ChevSlot><SmallChev /></ChevSlot></Big>
          </GroupItems>
          <GroupLabel $shift={16}>Charts</GroupLabel>
        </Group>
        <Group $w={148}>
          <GroupItems $pad={7}>
            <Big $w={44}><IconSlot><LineSpark /></IconSlot>Line</Big>
            <Big $w={44}><IconSlot><ColumnSpark /></IconSlot>Column</Big>
            <Big $w={46}><IconSlot><WinSpark /></IconSlot>Win/<span>Loss</span></Big>
          </GroupItems>
          <GroupLabel>Sparklines</GroupLabel>
        </Group>
        <Group $w={108}>
          <GroupItems $pad={6}>
            <Big $w={46}><IconSlot><SlicerIcon /></IconSlot>Slicer</Big>
            <Big $w={46}><IconSlot><TimelineIcon /></IconSlot>Timeline</Big>
          </GroupItems>
          <GroupLabel>Filters</GroupLabel>
        </Group>
        <Group $w={58}>
          <GroupItems $pad={4}>
            <Big $w={50}><IconSlot><LinkIcon /></IconSlot>Link</Big>
          </GroupItems>
          <GroupLabel>Links</GroupLabel>
        </Group>
        <Group $w={257}>
          <GroupItems $pad={6}>
            <Big $w={46}><IconSlot><TextBoxIcon /></IconSlot>Text<span>Box</span></Big>
            <Big $w={48}><IconSlot><DocIcon bars /></IconSlot>Header<span>&amp; Footer</span></Big>
            <Big $w={52}><IconSlot><WordArtGlyph>A</WordArtGlyph></IconSlot>WordArt<ChevSlot><SmallChev /></ChevSlot></Big>
            <Big $w={54}><IconSlot><SignatureIcon /></IconSlot>Signature<InlineLine>Line<SmallChev /></InlineLine></Big>
            <Big $w={44}><IconSlot><ObjectIcon /></IconSlot>Object</Big>
          </GroupItems>
          <GroupLabel>Text</GroupLabel>
        </Group>
        <Group $w={113}>
          <GroupItems $pad={7}>
            <Big $w={52}><IconSlot><PiGlyph>π</PiGlyph></IconSlot>Equation<ChevSlot><SmallChev /></ChevSlot></Big>
            <Big $w={46} $on><IconSlot><OmegaGlyph>Ω</OmegaGlyph></IconSlot>Symbol</Big>
          </GroupItems>
          <GroupLabel>Symbols</GroupLabel>
        </Group>
        <RedBox />
        <Collapse size={14} />
      </Ribbon>

      <FormulaRow>
        <NameBox>A1<Caret /></NameBox>
        <Grip>⋮</Grip>
        <FxBox>
          <X size={14} />
          <svg width="14" height="14" viewBox="0 0 14 14" fill="none" stroke="currentColor" strokeWidth="2"><path d="M2 8l3 4 7-10" /></svg>
          <FxText>fx</FxText>
        </FxBox>
        <FormulaInput>Employee ID<ChevronDown size={14} color="#aaa" /></FormulaInput>
      </FormulaRow>

      <SheetArea>
        <Sheet>
          <Corner>
            <svg width="17" height="17" viewBox="0 0 17 17"><path d="M17 0v17H0z" fill="#b4b4b4" /></svg>
          </Corner>
          {'ABCDEFGHIJ'.split('').map((c) => <ColHead key={c}>{c}</ColHead>)}
          <ColHead $blank />

          <RowHead>1</RowHead>
          {headers.map((h, i) => (
            <HeadCell key={h} $lit={i === 0} $left={i === 9}>
              {h}
              <FilterBtn $lit={i === 0}><FilterCaret /></FilterBtn>
            </HeadCell>
          ))}
          <HeadCell $lit>LYNX 2025</HeadCell>

          {rows.map((r) => <DataRow key={r[0]} r={r} />)}

          <RowHead>59</RowHead>
          <Cell $tone="white">EMP100058</Cell>
          <Cell $tone="white">Linda Hill</Cell>
          <Cell $tone="white">linda.hill412@darkside.corp</Cell>
          <Cell $tone="white"></Cell>
          <Cell $tone="white">Project Nu</Cell>
          <Cell $tone="white">Seoul</Cell>
          <Cell $tone="white">L4 - Senior</Cell>
          <Cell $tone="white"></Cell>
          <Cell $tone="wdone" $center>Completed</Cell>
          <Cell $tone="white"></Cell>
          <Cell $tone="wdone" $center>Completed</Cell>

          <Selection><Handle /></Selection>
        </Sheet>
        <VScroll>
          <ScrollBtn><Tri $dir="up" /></ScrollBtn>
          <VThumb />
          <VGap />
          <ScrollBtn><Tri $dir="down" /></ScrollBtn>
          <VEnd />
        </VScroll>
      </SheetArea>

      <SheetTabs>
        <TabArrows><Tri $dir="left" $color="#c4c4c4" /><Tri $dir="right" $color="#c4c4c4" /></TabArrows>
        <SheetTab>Employee Status</SheetTab>
        <AddSheet><Plus size={11} strokeWidth={2.5} /></AddSheet>
        <TabSplit>⋮</TabSplit>
        <HScroll>
          <ScrollBtn $wide={14}><Tri $dir="left" /></ScrollBtn>
          <HThumb />
          <HTrack />
          <ScrollBtn $wide={14}><Tri $dir="right" /></ScrollBtn>
        </HScroll>
      </SheetTabs>

      <StatusBar>
        <StatusLeft>
          <EnterText>Enter</EnterText>
          <svg width="16" height="16" viewBox="0 0 16 16" fill="none" stroke="#666">
            <path d="M3 8a5 5 0 0 1 5-5M13 8a5 5 0 0 1-2 4M8 1v3M2 8h3M11 8h3M5 11l3 3 5-6" />
          </svg>
          Accessibility: Good to go
        </StatusLeft>
        <CountText>Count: 566</CountText>
        <ViewIcon width="14" height="16" viewBox="0 0 14 16" fill="none" stroke="#666"><path d="M.5 1.500h13v13H.5zM.5 6h13M.5 10.500h13M5 1.500v13M9.500 1.500v13" /></ViewIcon>
        <ViewIcon width="14" height="16" viewBox="0 0 14 16" fill="none" stroke="#666"><path d="M.5 1.500h13v13H.5zM3.500 4.500h7v8h-7zM5 7h4M5 9h4M5 11h4" /></ViewIcon>
        <ViewIcon width="14" height="16" viewBox="0 0 14 16" fill="none" stroke="#666"><path d="M.5 1.500h13v13H.5zM.5 10.500h6v-9M6.500 10.500v4" /></ViewIcon>
        <Zoom>
          <Minus size={9} />
          <ZoomTrack><ZoomTick /></ZoomTrack>
          <Plus size={11} />
          <ZoomPct>130%</ZoomPct>
        </Zoom>
      </StatusBar>

      <Dialog>
        <DialogTitle>
          <TitleText>PivotTable from table or range</TitleText>
          <HelpMark>?</HelpMark>
          <DialogX size={14} />
        </DialogTitle>
        <DialogBody>
          <Legend $mt={4}>Select a table or range<Rule /></Legend>
          <SubRule />
          <FieldRow $mt={8} $indent={18}>
            <FieldLabel $w={78}><U>T</U>able/Range:</FieldLabel>
            <FieldBox><FieldText>'Employee Status'!$A$1:$J$58</FieldText><RefBtn><UpArrow /></RefBtn></FieldBox>
          </FieldRow>
          <Legend $mt={11}>Choose where you want the PivotTable to be placed<Rule /></Legend>
          <OptionRow $mt={10}><Radio /><span><U>N</U>ew Worksheet</span></OptionRow>
          <OptionRow $mt={6}><Radio $on /><span><U>E</U>xisting Worksheet</span></OptionRow>
          <FieldRow $mt={5} $indent={9}>
            <FieldLabel $w={57}><U>L</U>ocation:</FieldLabel>
            <FieldBox><FieldText><TextCursor /></FieldText><RefBtn><UpArrow /></RefBtn></FieldBox>
          </FieldRow>
          <Legend $mt={6}>Choose whether you want to analyze multiple tables<Rule /></Legend>
          <OptionRow $mt={7}><Check /><span>Add this data to the Data <U>M</U>odel</span></OptionRow>
          <ButtonRow>
            <DlgButton $primary>OK</DlgButton>
            <DlgButton>Cancel</DlgButton>
          </ButtonRow>
          <ResizeGrip width="10" height="10" viewBox="0 0 10 10" fill="#bbb">
            <path d="M7 1h2v2H7zM4 4h2v2H4zM7 4h2v2H7zM1 7h2v2H1zM4 7h2v2H4zM7 7h2v2H7z" />
          </ResizeGrip>
        </DialogBody>
        <Annot width="393" height="262" viewBox="0 0 393 262">
          <path d="M260 32l-13 23" stroke="#f00" strokeWidth="3" />
          <path d="M243 61l2-16 9 6z" fill="#f00" />
          <path d="M175 150h-20" stroke="#f00" strokeWidth="3" />
          <path d="M143 150l14-5v10z" fill="#f00" />
        </Annot>
      </Dialog>
    </Page>
  );
}
